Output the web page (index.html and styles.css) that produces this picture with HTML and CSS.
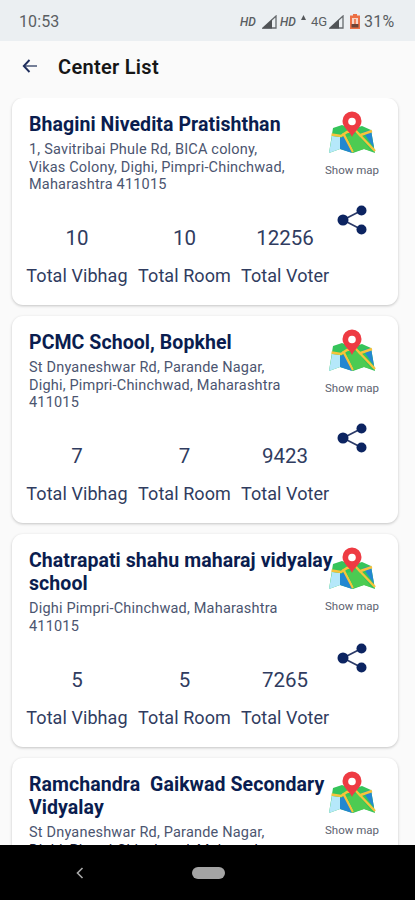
FILE: index.html
```html
<!DOCTYPE html>
<html lang="en">
<head>
<meta charset="utf-8">
<title>Center List</title>
<link rel="stylesheet" href="styles.css">
</head>
<body>
<svg class="defs" width="0" height="0" aria-hidden="true">
  <symbol id="map" viewBox="0 0 48 44">
    <path fill="#35c45a" d="M5 17 14 14 24 18 34 15 43 19 47 42 36 38 25 42 12 38 1 42Z"/>
    <path fill="#b5e8fa" d="M4 25 12 26 12 38 1 42Z"/>
    <path fill="#2387d1" d="M12 27 17 25 24 42 12 38Z"/>
    <path fill="#2387d1" d="M35 21 43 19 46 37Z"/>
    <path fill="none" stroke="#f7c33b" stroke-width="2.4" d="M3.500 23.500 13 25 19 21 29 19M15 22 25 41M24 27 44 20"/>
    <path fill="#4ccb52" d="M19 26 29 22 43 40 36 38 26 41Z"/>
    <path fill="none" stroke="#f7c33b" stroke-width="2.400" d="M28 20 47 40"/>
    <path fill="#ee3b43" d="M24 26C22 20 14.500 17 14.500 10a9.500 9.500 0 0 1 19 0C33.500 17 26 20 24 26Z"/>
    <circle cx="24" cy="10.500" r="3.800" fill="#fff"/>
  </symbol>
  <symbol id="share" viewBox="0 0 30 30">
    <path d="M24.500 5.500 6 15 24.500 24.500" fill="none" stroke="#2b3a68" stroke-width="1.700"/>
    <g fill="#0c2461"><circle cx="24.500" cy="5.500" r="5"/><circle cx="6" cy="15" r="5.500"/><circle cx="24.500" cy="24.500" r="5"/></g>
  </symbol>
  <symbol id="signal" viewBox="0 0 15 14">
    <path d="M1 13 14 1V13Z" fill="none" stroke="#666a6d" stroke-width="1.300"/><path d="M0 13.500 10 4.500V13.500Z" fill="#505356"/>
  </symbol>
</svg>
<div class="phone">
  <header class="status">
    <span class="time">10:53</span>
    <span class="hd">HD</span>
    <svg class="signal"><use href="#signal"/></svg>
    <span class="hd hd2">HD</span>
    <svg class="up" viewBox="0 0 5 5"><path d="M0 5 2.500 0 5 5Z" fill="#55585b"/></svg>
    <span class="net">4G</span>
    <svg class="signal"><use href="#signal"/></svg>
    <svg class="battery" viewBox="0 0 10 15"><path d="M3 0h4v1.500h3V15H0V1.500h3Z" fill="#ec7045"/><path d="M2 4h6v6H2Z" fill="#f5d5c8"/><path d="M4.200 5h1.600v5H4.200Z" fill="#ec7045"/><path d="M1.500 10h7v3.500h-7Z" fill="#6d4438"/></svg>
    <span class="percent">31%</span>
  </header>
  <nav class="bar">
    <svg class="back" viewBox="0 0 16 14"><path d="M3 7H15" stroke="#66718d" stroke-width="1.800"/><path d="M7.500 1 1.800 7 7.500 13" fill="none" stroke="#1e2d5c" stroke-width="1.900"/></svg>
    <h1>Center List</h1>
  </nav>
  <main class="list">
    <article class="card">
      <div class="info">
        <h2>Bhagini Nivedita Pratishthan</h2>
        <p>1, Savitribai Phule Rd, BICA colony,<br>Vikas Colony, Dighi, Pimpri-Chinchwad,<br>Maharashtra 411015</p>
        <dl class="stats"><div><dd>10</dd><dt>Total Vibhag</dt></div><div><dd>10</dd><dt>Total Room</dt></div><div><dd>12256</dd><dt>Total Voter</dt></div></dl>
      </div>
      <aside class="actions"><svg class="map"><use href="#map"/></svg><span>Show map</span><svg class="share"><use href="#share"/></svg></aside>
    </article>
    <article class="card">
      <div class="info">
        <h2>PCMC School, Bopkhel</h2>
        <p>St Dnyaneshwar Rd, Parande Nagar,<br>Dighi, Pimpri-Chinchwad, Maharashtra<br>411015</p>
        <dl class="stats"><div><dd>7</dd><dt>Total Vibhag</dt></div><div><dd>7</dd><dt>Total Room</dt></div><div><dd>9423</dd><dt>Total Voter</dt></div></dl>
      </div>
      <aside class="actions"><svg class="map"><use href="#map"/></svg><span>Show map</span><svg class="share"><use href="#share"/></svg></aside>
    </article>
    <article class="card tall">
      <div class="info">
        <h2>Chatrapati shahu maharaj vidyalay<br>school</h2>
        <p>Dighi Pimpri-Chinchwad, Maharashtra<br>411015</p>
        <dl class="stats"><div><dd>5</dd><dt>Total Vibhag</dt></div><div><dd>5</dd><dt>Total Room</dt></div><div><dd>7265</dd><dt>Total Voter</dt></div></dl>
      </div>
      <aside class="actions"><svg class="map"><use href="#map"/></svg><span>Show map</span><svg class="share"><use href="#share"/></svg></aside>
    </article>
    <article class="card tall">
      <div class="info">
        <h2>Ramchandra&nbsp; Gaikwad Secondary<br>Vidyalay</h2>
        <p>St Dnyaneshwar Rd, Parande Nagar,<br><span class="edge">Dighi, Pimpri-Chinchwad, Maharashtra</span></p>
      </div>
      <aside class="actions"><svg class="map"><use href="#map"/></svg><span>Show map</span></aside>
    </article>
  </main>
  <footer class="system">
    <svg class="prev" viewBox="0 0 8 12"><path d="M6.500 1 1.500 6 6.500 11" fill="none" stroke="#aaa" stroke-width="1.600"/></svg>
    <span class="home"></span>
  </footer>
</div>
</body>
</html>
```

FILE: styles.css
```css
* { box-sizing: border-box; margin: 0; }
body { font-family: Roboto, "Liberation Sans", sans-serif; background: #fafafa; color: #1b2a55; }
.defs { display: none; }
.phone { height: 900px; display: flex; flex-direction: column; overflow: hidden; }
svg { display: block; flex: none; }

.status { height: 41px; flex: none; background: #ebeff2; display: flex; align-items: center; padding: 2px 19px 0; color: #5a5e62; white-space: nowrap; }
.time { font-size: 16px; letter-spacing: .1px; width: 221px; }
.hd { font-size: 12px; font-weight: 500; font-style: italic; width: 22px; }
.hd2 { margin-left: 3px; width: 19px; }
.signal { width: 15px; height: 14px; }
.up { width: 5px; height: 5px; margin: -9px 5px 0 2px; }
.net { font-size: 13px; width: 18px; }
.battery { width: 10px; height: 15px; margin: 0 4px 0 6px; }
.percent { font-size: 16px; letter-spacing: .2px; }

.bar { height: 57px; flex: none; display: flex; align-items: center; padding: 0 0 5px 22px; }
.back { width: 16px; height: 14px; margin: -2px 20px 0 0; }
h1 { font-size: 20px; line-height: 24px; font-weight: 600; letter-spacing: .3px; color: #161616; }

.list { flex: 1; min-height: 0; overflow: hidden; padding: 0 17px 0 12px; display: flex; flex-direction: column; gap: 11px; }
.card { height: 207px; flex: none; background: #fff; border-radius: 11px; box-shadow: 0 1px 3px rgba(0,0,0,.22); display: flex; padding: 14px 17px 0; white-space: nowrap; }
.tall { height: 213px; }
.info { width: 294px; flex: none; padding-top: 1px; }
h2 { font-size: 19.5px; line-height: 23px; font-weight: 700; letter-spacing: .07px; color: #0a1d4f; }
p { font-size: 14.5px; line-height: 17.5px; letter-spacing: .19px; margin-top: 5px; color: #4b5570; height: 53px; }
.tall p { height: 35px; }
.edge { color: #18203a; }
.stats { display: flex; gap: 10px; margin: 29px 0 0 -3px; text-align: center; width: 303px; }
.stats div:nth-child(1) { width: 102px; }
.stats div:nth-child(2) { width: 93px; }
.stats div:nth-child(3) { width: 88px; }
.tall .stats { margin-top: 30px; }
dd { font-size: 20.5px; line-height: 30px; color: #303c5f; }
dt { font-size: 18px; line-height: 24px; letter-spacing: .07px; margin-top: 11px; color: #303c5f; }
.actions { width: 58px; display: flex; flex-direction: column; align-items: center; }
.map { width: 48px; height: 44px; margin-top: -1px; }
.actions span { font-size: 11.5px; line-height: 14px; margin-top: 8px; color: #5c6270; }
.share { width: 30px; height: 30px; margin-top: 28px; }
.tall .share { margin-top: 30px; }

.system { height: 55px; flex: none; background: #000; display: flex; align-items: center; padding-left: 76px; }
.prev { width: 8px; height: 12px; }
.home { width: 33px; height: 12px; border-radius: 6px; background: #a4a4a4; margin-left: 108px; }
```
